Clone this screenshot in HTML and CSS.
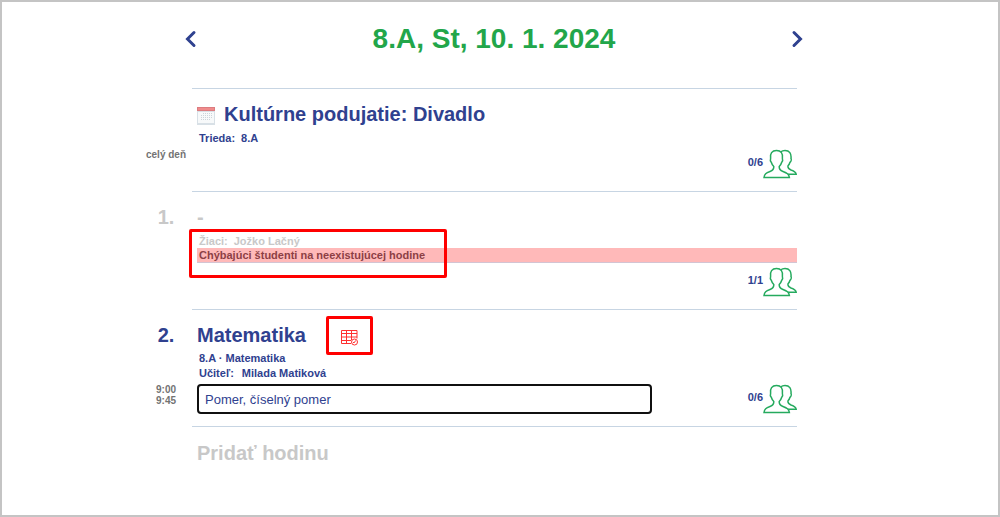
FILE: index.html
```
<!DOCTYPE html>
<html lang="sk">
<head>
<meta charset="utf-8">
<title>Triedna kniha 8.A</title>
<link rel="stylesheet" href="styles.css">
</head>
<body>
<svg class="defs" aria-hidden="true">
  <symbol id="people" viewBox="0 0 34 30">
    <path d="M17.500 3C19 1.900 20.500 1.500 22 1.500C26.500 1.500 28.500 4.500 28 9.500C28.600 10.500 28 12.500 27 13.300C26.500 15 25.800 16 25 16.800C24.600 19 25.300 19.800 28 21C31.500 22.200 33 23.200 33.200 25.200H25"/>
    <path fill="#fff" d="M1 28.500C1.500 25 3 24 7 22.500C10 21.300 11 20 10.800 17.500C9.500 16.300 8.800 15 8.400 13.500C7.500 12.500 7 11 7.600 9.500C6.800 4.500 9 1.500 13.500 1.500C18 1.500 20.200 4.500 19.400 9.500C20 11 19.500 12.500 18.600 13.500C18.200 15 17.500 16.300 16.200 17.500C16 20 17 21.300 20 22.500C24 24 25.900 25 26.400 28.500Z"/>
  </symbol>
</svg>
<main class="page">
  <header class="daybar">
    <button class="nav" aria-label="Predchádzajúci deň"><svg class="chevron" viewBox="0 0 12 18"><path d="M9 2.500L2.500 9L9 15.500"/></svg></button>
    <h1 class="date">8.A, St, 10. 1. 2024</h1>
    <button class="nav" aria-label="Nasledujúci deň"><svg class="chevron" viewBox="0 0 12 18"><path d="M3 2.500L9.500 9L3 15.500"/></svg></button>
  </header>

  <section class="row">
    <div class="side"><span class="time allday">celý deň</span></div>
    <div class="body event">
      <h2 class="title"><svg class="calendar" viewBox="0 0 18 18"><path fill="#d8e0e6" d="M0 1h18v17H0z"/><path fill="#f7f9fa" d="M1 5h16v11H1z"/><path fill="#dc7c80" d="M0 0h18v4H0z"/><path fill="#f08b8b" d="M1 1h16v2H1z"/><path stroke="#ccd4da" stroke-dasharray="1 1" d="M6 6.500h9M4 8.500h11M4 10.500h11M4 12.500h9"/></svg>Kultúrne podujatie: Divadlo</h2>
      <p class="meta"><span>Trieda:</span><span>8.A</span></p>
      <button class="count"><span>0/6</span><svg class="people"><use href="#people"/></svg></button>
    </div>
  </section>

  <section class="row">
    <div class="side"><span class="number muted">1.</span></div>
    <div class="body missing">
      <h2 class="title muted">-</h2>
      <p class="meta muted"><span>Žiaci:</span><span>Jožko Lačný</span></p>
      <p class="warning">Chýbajúci študenti na neexistujúcej hodine</p>
      <button class="count"><span>1/1</span><svg class="people"><use href="#people"/></svg></button>
      <div class="mark mark-warning"></div>
    </div>
  </section>

  <section class="row">
    <div class="side"><span class="number">2.</span><span class="time">9:00<br>9:45</span></div>
    <div class="body lesson">
      <h2 class="title">Matematika
        <button class="schedule" aria-label="Rozvrh"><svg viewBox="0 0 18 18"><path d="M.5 2.500h15.500v8M.5 2.500v13h9.500M.5 5.500h15.500M.5 12.500h9.500M5.500 2.500v13M10.500 2.500v9.500"/><path class="faint" d="M.5 8.500h15.500M.5 9.500h15.500"/><circle cx="13.500" cy="14" r="3"/><path d="M14.500 12.500L13.500 14.500H12"/></svg></button>
      </h2>
      <p class="meta">8.A · Matematika</p>
      <p class="meta teacher"><span>Učiteľ:</span><span>Milada Matiková</span></p>
      <div class="entry">
        <input class="topic" type="text" aria-label="Téma hodiny" value="Pomer, číselný pomer">
        <button class="count"><span>0/6</span><svg class="people"><use href="#people"/></svg></button>
      </div>
      <div class="mark mark-schedule"></div>
    </div>
  </section>

  <section class="row">
    <div class="side"></div>
    <div class="body"><button class="add">Pridať hodinu</button></div>
  </section>
</main>
</body>
</html>
```
FILE: styles.css
```
* { box-sizing: border-box; }
body {
  margin: 0;
  min-height: 100vh;
  border: 2px solid #c4c4c4;
  background: #fff;
  color: #2f418f;
  font-family: "Liberation Sans", Arial, sans-serif;
}
h1, h2, p { margin: 0; }
button {
  padding: 0;
  border: 0;
  background: none;
  color: inherit;
  font: inherit;
  cursor: pointer;
}
.defs { position: absolute; width: 0; height: 0; }
.page {
  max-width: 708px;
  margin: 0 auto;
  padding: 19px 57px 24px 0;
}
.daybar {
  display: flex;
  align-items: center;
  justify-content: space-between;
  margin: 0 -6px 0 39px;
  padding-bottom: 31px;
}
.date {
  color: #22a64a;
  font-size: 28px;
  line-height: 36px;
}
.nav { display: flex; }
.chevron {
  width: 12px;
  height: 18px;
  fill: none;
  stroke: #2f418f;
  stroke-width: 3;
  stroke-linecap: round;
}
.row {
  display: grid;
  grid-template-columns: 46px minmax(0, 1fr);
}
.side {
  display: flex;
  flex-direction: column;
  align-items: center;
  padding: 14px 6px 0 0;
}
.number {
  font-size: 20px;
  font-weight: bold;
  line-height: 24px;
}
.time {
  margin-top: 37px;
  color: #737373;
  font-size: 10px;
  font-weight: bold;
  line-height: 11px;
  white-space: nowrap;
}
.allday { margin-top: 47px; }
.body {
  position: relative;
  padding: 13px 0 12px 5px;
  border-top: 1px solid #c7d5e3;
}
.title {
  display: flex;
  align-items: center;
  font-size: 20px;
  line-height: 24px;
}
.muted { color: #c8c8c8; }
.calendar {
  width: 18px;
  height: 18px;
  margin: 4px 9px 0 0;
}
.meta {
  display: flex;
  gap: 6px;
  padding-left: 2px;
  font-size: 11px;
  font-weight: bold;
  line-height: 15px;
}
.teacher { gap: 8px; }
.event .meta { padding-top: 5px; }
.missing .meta { padding-top: 5px; line-height: 14px; }
.lesson .title { margin-bottom: 4px; }
.warning {
  padding-left: 2px;
  border-bottom: 1px solid #d3c4d3;
  background: #ffb9b9;
  color: #8d3f45;
  font-size: 11px;
  font-weight: bold;
  line-height: 14px;
}
.count {
  display: flex;
  align-items: center;
  margin-left: auto;
  font-size: 11px;
  font-weight: bold;
  line-height: 14px;
}
.count span { padding-bottom: 4px; }
.event .count { margin-top: 3px; }
.missing .count { margin-top: 4px; }
.people {
  width: 34px;
  height: 30px;
  fill: none;
  stroke: #25aa5e;
  stroke-width: 1.5;
}
.schedule {
  display: flex;
  margin: 4px 0 0 35px;
}
.schedule svg {
  width: 18px;
  height: 18px;
  fill: none;
  stroke: #ff3030;
  stroke-width: 1;
}
.faint { stroke-opacity: .5; }
.entry {
  display: flex;
  align-items: center;
  margin-top: 3px;
}
.topic {
  width: 455px;
  min-width: 0;
  height: 30px;
  padding: 0 6px;
  border: 2px solid #101010;
  border-radius: 4px;
  outline: 0;
  background: #fff;
  color: #2f418f;
  font: 13px "Liberation Sans", Arial, sans-serif;
}
.mark {
  position: absolute;
  border: 3px solid #f00;
  border-radius: 2px;
  pointer-events: none;
}
.mark-warning {
  top: 37px;
  left: -3px;
  width: 258px;
  height: 49px;
}
.mark-schedule {
  top: 6px;
  left: 134px;
  width: 47px;
  height: 39px;
}
.add {
  color: #c8c8c8;
  font-size: 20px;
  font-weight: bold;
  line-height: 26px;
}
```
